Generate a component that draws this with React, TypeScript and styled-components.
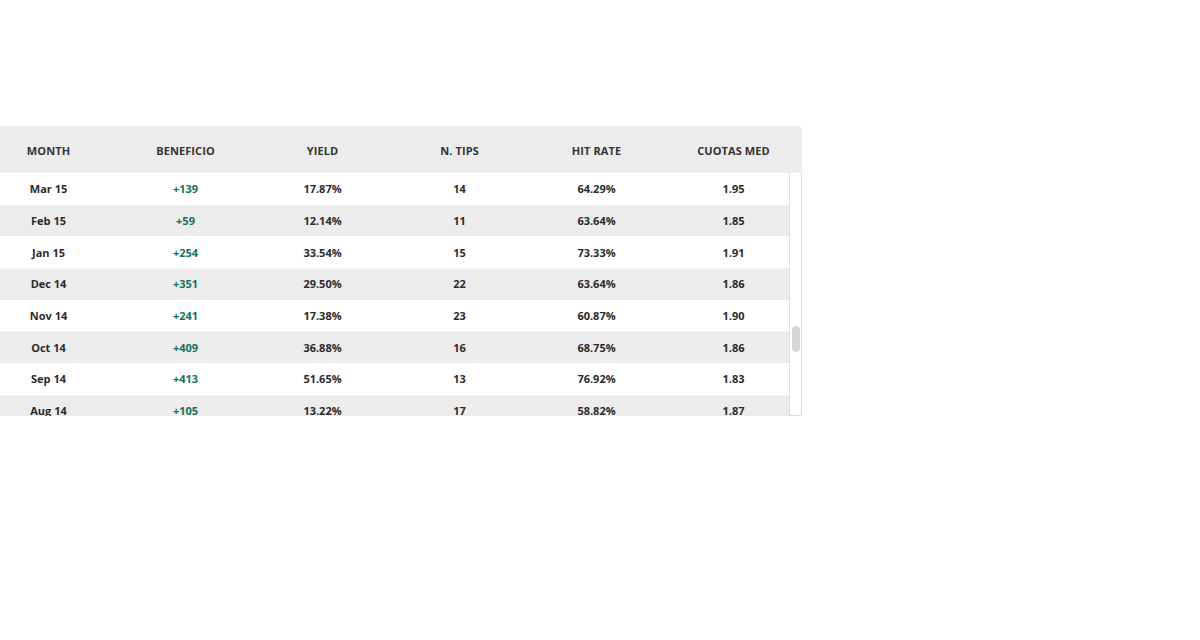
import React from "react";
import styled, { createGlobalStyle } from "styled-components";

const GlobalStyle = createGlobalStyle`
  html, body { margin: 0; padding: 0; background: #ffffff; }
  body { font-family: "Open Sans", "Liberation Sans", sans-serif; overflow: hidden; }
`;

const Page = styled.div`
  width: 1200px;
  height: 640px;
  padding-top: 126px;
  box-sizing: border-box;
  overflow: hidden;
`;

const Table = styled.div`
  width: 822px;
  margin-left: -20px;
  display: flex;
  flex-direction: column;
`;

const HeaderRow = styled.div`
  display: grid;
  grid-template-columns: repeat(6, 137px);
  height: 47px;
  box-sizing: border-box;
  padding-top: 2px;
  align-items: center;
  background: #ececec;
  border-top-right-radius: 4px;
`;

const HeadCell = styled.div`
  text-align: center;
  font-size: 11px;
  font-weight: 700;
  color: #333333;
  letter-spacing: 0.1px;
`;

const Body = styled.div`
  display: flex;
  height: 243px;
`;

const Rows = styled.div`
  width: 809px;
  overflow: hidden;
  display: flex;
  flex-direction: column;
`;

const Row = styled.div<{ $alt: boolean }>`
  flex: 0 0 31.7px;
  display: grid;
  grid-template-columns: repeat(6, 137px);
  align-items: center;
  background: ${(p) => (p.$alt ? "#ececec" : "#ffffff")};
  box-shadow: inset 0 1px 0 ${(p) => (p.$alt ? "#f3f3f3" : "#ffffff")};
`;

const Cell = styled.div<{ $green?: boolean }>`
  text-align: center;
  font-size: 11px;
  font-weight: 700;
  color: ${(p) => (p.$green ? "#127356" : "#2b2b2b")};
`;

const Track = styled.div`
  width: 13px;
  box-sizing: border-box;
  border: 1px solid #dddddd;
  border-top: none;
  background: #ffffff;
  display: flex;
  justify-content: center;
`;

const Thumb = styled.div`
  margin-top: 153px;
  width: 8px;
  height: 26px;
  border-radius: 4px;
  background: #d6d6d6;
`;

type Item = { m: string; b: string; y: string; t: string; h: string; c: string };

const data: Item[] = [
  { m: "Mar 15", b: "+139", y: "17.87%", t: "14", h: "64.29%", c: "1.95" },
  { m: "Feb 15", b: "+59", y: "12.14%", t: "11", h: "63.64%", c: "1.85" },
  { m: "Jan 15", b: "+254", y: "33.54%", t: "15", h: "73.33%", c: "1.91" },
  { m: "Dec 14", b: "+351", y: "29.50%", t: "22", h: "63.64%", c: "1.86" },
  { m: "Nov 14", b: "+241", y: "17.38%", t: "23", h: "60.87%", c: "1.90" },
  { m: "Oct 14", b: "+409", y: "36.88%", t: "16", h: "68.75%", c: "1.86" },
  { m: "Sep 14", b: "+413", y: "51.65%", t: "13", h: "76.92%", c: "1.83" },
  { m: "Aug 14", b: "+105", y: "13.22%", t: "17", h: "58.82%", c: "1.87" },
  { m: "Jul 14", b: "+88", y: "10.12%", t: "18", h: "55.56%", c: "1.92" },
];

const headers = ["MONTH", "BENEFICIO", "YIELD", "N. TIPS", "HIT RATE", "CUOTAS MED"];

export default function App() {
  return (
    <Page>
      <GlobalStyle />
      <Table>
        <HeaderRow>
          {headers.map((h) => (
            <HeadCell key={h}>{h}</HeadCell>
          ))}
        </HeaderRow>
        <Body>
          <Rows>
            {data.map((r, i) => (
              <Row key={r.m} $alt={i % 2 === 1}>
                <Cell>{r.m}</Cell>
                <Cell $green>{r.b}</Cell>
                <Cell>{r.y}</Cell>
                <Cell>{r.t}</Cell>
                <Cell>{r.h}</Cell>
                <Cell>{r.c}</Cell>
              </Row>
            ))}
          </Rows>
          <Track>
            <Thumb />
          </Track>
        </Body>
      </Table>
    </Page>
  );
}
